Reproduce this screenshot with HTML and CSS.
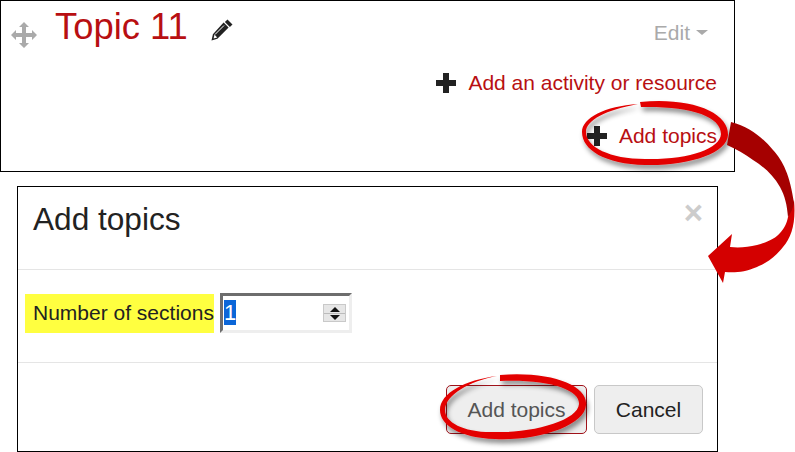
FILE: index.html
```html
<!DOCTYPE html>
<html lang="en">
<head>
<meta charset="utf-8">
<title>Add topics</title>
<link rel="stylesheet" href="styles.css">
</head>
<body>
<div class="page">
  <section class="panel">
    <div class="panel-head">
      <svg class="move" viewBox="0 0 26 26" aria-hidden="true"><path d="M13 0l5 5h-3v6h6V8l5 5-5 5v-3h-6v6h3l-5 5-5-5h3v-6H5v3l-5-5 5-5v3h6V5H8z"/></svg>
      <h2 class="topic">Topic 11</h2>
      <svg class="pencil" viewBox="0 0 22 22" aria-hidden="true"><path d="M16.5 0.5l5 5-2.6 2.6-5-5zM12.6 3.6l5 5L6.4 19.8 0.5 21.5l1.4-6.3zM3.5 15.6l-.9 3.8 3.6-1z"/><path class="pencil-hi" d="M4 15.5L13 6.5"/></svg>
      <div class="edit">Edit <span class="caret"></span></div>
    </div>
    <a class="add-link first"><span class="plus"></span><span>Add an activity or resource</span></a>
    <a class="add-link"><span class="plus"></span><span>Add topics</span></a>
  </section>
  <section class="dialog">
    <header class="dialog-head">
      <h3>Add topics</h3>
      <span class="close">×</span>
    </header>
    <div class="dialog-body">
      <label class="field-label">Number of sections</label>
      <div class="number-input">
        <span class="selected">1</span>
        <span class="spinner"><i class="up"></i><i class="bar"></i><i class="down"></i></span>
      </div>
    </div>
    <footer class="dialog-foot">
      <button class="btn primary">Add topics</button>
      <button class="btn">Cancel</button>
    </footer>
  </section>
  <svg class="overlay" viewBox="0 0 795 452" aria-hidden="true">
    <defs>
      <filter id="sh" x="-10%" y="-20%" width="120%" height="150%"><feDropShadow dx="2" dy="4" stdDeviation="2.5" flood-color="#000" flood-opacity=".45"/></filter>
    </defs>
    <path class="ring" filter="url(#sh)" d="M640 102C690 97 729 112 728 135C727 153 690 166 645 165C605 164 582 150 582 132C582 118 605 106 638 104C606 110 586 120 586 132C586 147 610 159 645 159C688 160 720 149 721 134C721 116 690 106 641 107Z"/>
    <path class="ring" filter="url(#sh)" d="M500 375C550 371 588 385 586 405C585 425 540 441 495 439C460 438 440 425 440 410C440 393 465 380 497 376C470 381 445 395 445 410C445 423 465 433 495 432C535 433 578 420 579 404C580 390 550 379 500 381Z"/>
    <path class="arrow-light" d="M788 217L794 200C796 222 792 237 783 247C774 259 762 265 757 267C745 272 735 273 725 272L723 283L708 256L732 234L730 247C740 248 748 247 757 245C768 242 776 238 780 233C785 228 787 222 788 217Z"/>
    <path class="arrow-dark" d="M731 122C750 127 763 138 773 150C783 161 790 175 794 203C793 208 791 213 788 217C787 205 785 196 780 187C773 175 764 167 753 160C745 154 736 149 727 145Z"/>
  </svg>
</div>
</body>
</html>
```
FILE: styles.css
```css
* { box-sizing: border-box; }
html, body { margin: 0; padding: 0; background: #fff; }
body { font-family: "Liberation Sans", Arial, sans-serif; color: #222; overflow: hidden; }
.page { position: relative; width: 795px; height: 452px; }
.panel {
  width: 735px; height: 172px; border: 1px solid #000;
  padding: 0 17px 0 10px; display: flex; flex-direction: column; align-items: stretch;
}
.panel-head { display: flex; align-items: flex-start; height: 60px; }
.move { width: 26px; height: 26px; fill: #aaa; margin: 21px 18px 0 0; flex: none; }
.topic { margin: 5px 0 0; font-size: 36.4px; line-height: 42px; font-weight: 400; color: #b80f12; }
.pencil { width: 22px; height: 22px; fill: #222; margin: 18px 0 0 23px; flex: none; }
.pencil-hi { stroke: #fff; stroke-width: 1; fill: none; }
.edit { margin: 20px 9px 0 auto; font-size: 21px; line-height: 23px; color: #aaa; display: flex; align-items: center; gap: 6px; }
.caret { width: 0; height: 0; border: 6px solid transparent; border-top: 5px solid #aaa; border-bottom: 0; }
.add-link { display: flex; align-items: center; justify-content: flex-end; gap: 12px; font-size: 21px; line-height: 24px; color: #b80f12; }
.add-link.first { margin: 10px 0 29px; }
.plus { width: 20px; height: 20px; flex: none; background: linear-gradient(#222, #222) center / 100% 6px no-repeat, linear-gradient(#222, #222) center / 6px 100% no-repeat; }
.dialog { width: 701px; height: 266px; margin: 14px 0 0 17px; border: 1px solid #000; display: flex; flex-direction: column; }
.dialog-head { height: 83px; padding: 0 15px; border-bottom: 1px solid #e5e5e5; display: flex; justify-content: space-between; }
.dialog-head h3 { margin: 13px 0 0; font-size: 31.6px; line-height: 38px; font-weight: 400; color: #222; }
.close { font-size: 33px; line-height: 30px; font-weight: 700; color: #ccc; margin: 11px -1px 0 0; }
.dialog-body { height: 93px; padding: 23px 0 0 7px; display: flex; align-items: flex-start; border-bottom: 1px solid #e5e5e5; }
.field-label { width: 189px; height: 39px; padding-left: 8px; background: #ffff40; font-size: 21px; line-height: 38px; white-space: nowrap; margin-top: 1px; color: #222; }
.number-input { width: 132px; height: 40px; margin-left: 6px; border: 3px solid #eee; border-top-color: #6d6d6d; border-left-color: #6d6d6d; display: flex; align-items: flex-start; justify-content: space-between; padding: 4px 3px 0 1px; background: #fff; }
.selected { width: 12px; height: 25px; background: #0b66d8; color: #fff; font-size: 22px; line-height: 25px; }
.spinner { width: 23px; height: 18px; margin-top: 4px; background: #e6e6e6; border: 1px solid #c9c9c9; display: flex; flex-direction: column; align-items: center; justify-content: center; gap: 1px; }
.spinner i { width: 0; height: 0; border: 5px solid transparent; }
.spinner .up { border-top: 0; border-bottom: 5px solid #111; }
.spinner .down { border-bottom: 0; border-top: 5px solid #111; }
.spinner .bar { width: 100%; height: 1px; border: 0; background: #bbb; }
.dialog-foot { flex: 1; padding: 22px 14px 0 0; display: flex; justify-content: flex-end; align-items: flex-start; gap: 7px; }
.btn { height: 49px; font: 21px "Liberation Sans", Arial, sans-serif; background: #eee; border: 1px solid #c8c8c8; border-radius: 5px; color: #222; padding: 0; width: 109px; }
.btn.primary { width: 141px; border-color: #a0121a; color: #555; }
.overlay { position: absolute; left: 0; top: 0; width: 795px; height: 452px; pointer-events: none; }
.ring { fill: #e30000; }
.arrow-dark { fill: #a50000; }
.arrow-light { fill: #d40000; }
```
